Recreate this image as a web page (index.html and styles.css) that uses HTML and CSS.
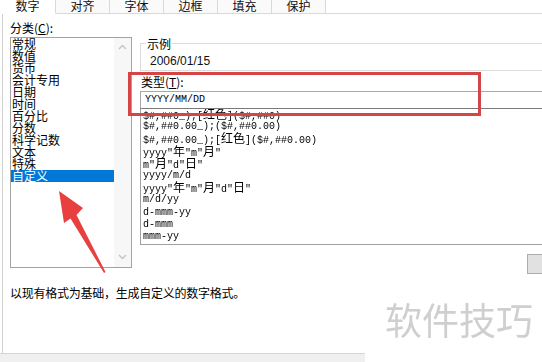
FILE: index.html
```html
<!DOCTYPE html>
<html lang="zh-CN">

<head>
    <meta charset="UTF-8">
    <title>设置单元格格式</title>
    <link rel="stylesheet" href="styles.css">
</head>

<body>

    <div class="dialog">
        <div class="tabs">
            <div class="tab active">数字</div>
            <div class="tab">对齐</div>
            <div class="tab">字体</div>
            <div class="tab">边框</div>
            <div class="tab">填充</div>
            <div class="tab">保护</div>
            <div class="tab-fill"></div>
        </div>

        <div class="panel">
            <div class="top">
                <div class="cat">
                    <div class="label">分类(<u>C</u>):</div>
                    <div class="catbox">
                        <ul class="catlist">
                            <li>常规</li>
                            <li>数值</li>
                            <li>货币</li>
                            <li>会计专用</li>
                            <li>日期</li>
                            <li>时间</li>
                            <li>百分比</li>
                            <li>分数</li>
                            <li>科学记数</li>
                            <li>文本</li>
                            <li>特殊</li>
                            <li class="sel">自定义</li>
                        </ul>
                        <div class="vscroll">
                            <svg width="17" height="14" viewBox="0 0 17 14"><path d="M5 9 L8.5 5.5 L12 9" fill="none" stroke="#c4c4c4" stroke-width="1.4"/></svg>
                            <svg width="17" height="14" viewBox="0 0 17 14"><path d="M5 5 L8.5 8.5 L12 5" fill="none" stroke="#c4c4c4" stroke-width="1.4"/></svg>
                        </div>
                    </div>
                </div>

                <div class="fmt">
                    <div class="sample">
                        <div class="legend">示例</div>
                        <div class="sample-val">2006/01/15</div>
                    </div>
                    <div class="label type-label">类型(<u>T</u>):</div>
                    <div class="type-input">YYYY/MM/DD</div>
                    <ul class="fmtlist">
                        <li>$#,##0_);[<span class="cj">红色</span>]($#,##0)</li>
                        <li>$#,##0.00_);($#,##0.00)</li>
                        <li>$#,##0.00_);[<span class="cj">红色</span>]($#,##0.00)</li>
                        <li>yyyy"<span class="cj">年</span>"m"<span class="cj">月</span>"</li>
                        <li>m"<span class="cj">月</span>"d"<span class="cj">日</span>"</li>
                        <li>yyyy/m/d</li>
                        <li>yyyy"<span class="cj">年</span>"m"<span class="cj">月</span>"d"<span class="cj">日</span>"</li>
                        <li>m/d/yy</li>
                        <li>d-mmm-yy</li>
                        <li>d-mmm</li>
                        <li>mmm-yy</li>
                    </ul>
                    <div class="btn-row">
                        <div class="btn"></div>
                    </div>
                </div>
            </div>

            <p class="desc">以现有格式为基础，生成自定义的数字格式。</p>
        </div>

        <div class="statusbar"></div>
    </div>

    <!-- annotation drawn on top of the screenshot -->
    <svg class="marks" width="542" height="362" viewBox="0 0 542 362">
        <rect x="129.5" y="73.5" width="350" height="41" fill="none" stroke="#d64545" stroke-width="3"/>
        <polygon points="59,191 83,208 76.5,215 105.5,272 104,273 70.5,218.5 64,223" fill="#e8403f"/>
    </svg>

    <div class="watermark">软件技巧</div>

</body>

</html>
```

FILE: styles.css
```css
body {
    margin: 0;
    padding: 0;
    width: 542px;
    height: 362px;
    overflow: hidden;
    position: relative;
    background-color: #fff;
    color: #000;
    font-family: "Noto Sans CJK SC", "Liberation Sans", sans-serif;
    font-size: 12px;
}

ul {
    list-style: none;
    margin: 0;
    padding: 0;
}

u {
    text-decoration: underline;
}

.dialog {
    width: 542px;
    height: 362px;
    overflow: hidden;
}

/* tab strip */
.tabs {
    display: flex;
    height: 14px;
}

.tab {
    box-sizing: border-box;
    width: 54px;
    height: 14px;
    line-height: 11px;
    text-align: center;
    background-color: #fafafa;
    border-right: 1px solid #d9d9d9;
    border-bottom: 1px solid #d9d9d9;
    color: #111;
}

.tab.active {
    width: 56px;
    background-color: #fff;
    border-bottom-color: #fff;
}

.tab-fill {
    flex: 1;
    border-bottom: 1px solid #d9d9d9;
}

/* main page of the tab */
.panel {
    box-sizing: border-box;
    height: 339px;
    margin-left: 2px;
    padding-left: 7px;
    border-left: 1px solid #d0d0d0;
}

.top {
    display: flex;
    align-items: flex-start;
}

.label {
    height: 12px;
    line-height: 12px;
}

.cat {
    flex: 0 0 122px;
}

.cat .label {
    margin-top: 8px;
}

.catbox {
    box-sizing: border-box;
    display: flex;
    height: 231px;
    margin-top: 3px;
    border: 1px solid #a3a3a3;
}

.catlist {
    flex: 1;
}

.catlist li {
    height: 12px;
    line-height: 12px;
    padding-left: 1px;
    white-space: nowrap;
}

.catlist li.sel {
    background-color: #0078d7;
    color: #fff;
}

.vscroll {
    flex: 0 0 17px;
    display: flex;
    flex-direction: column;
    justify-content: space-between;
    background-color: #f7f7f7;
    padding: 2px 0 3px;
}

.vscroll svg {
    display: block;
}

.fmt {
    flex: 0 0 420px;
    margin-left: 8px;
}

.sample {
    box-sizing: border-box;
    height: 28px;
    margin-top: 29px;
    border: 1px solid #dcdcdc;
}

.legend {
    width: max-content;
    height: 12px;
    line-height: 12px;
    margin-top: -6px;
    margin-left: 5px;
    padding: 0 1px;
    background-color: #fff;
}

.sample-val {
    margin-top: 5px;
    margin-left: 9px;
    height: 12px;
    line-height: 12px;
    font-family: "Liberation Sans", sans-serif;
    font-size: 12px;
    color: #111;
}

.type-label {
    margin-top: 5px;
    margin-left: 1px;
}

.type-input {
    box-sizing: border-box;
    height: 17px;
    margin-top: 3px;
    padding-left: 4px;
    line-height: 15px;
    border: 1px solid #a9a9a9;
    border-bottom: none;
    font-family: "Liberation Mono", monospace;
    font-size: 10px;
}

.fmtlist {
    box-sizing: border-box;
    height: 137px;
    border-top: 1px solid #7a7a7a;
    border-left: 1px solid #a0a0a0;
    border-bottom: 1px solid #a0a0a0;
    padding-left: 2px;
    font-family: "Liberation Mono", monospace;
    font-size: 10px;
    color: #000;
    overflow: hidden;
    will-change: transform;
}

.fmtlist li {
    height: 12.2px;
    line-height: 12.2px;
    white-space: nowrap;
}

.cj {
    font-family: "Noto Sans CJK SC", sans-serif;
    font-size: 12px;
    line-height: 10px;
}

.btn-row {
    display: flex;
    margin-top: 9px;
    padding-left: 387px;
}

.btn {
    box-sizing: border-box;
    width: 80px;
    height: 20px;
    background-color: #e1e1e1;
    border: 1px solid #adadad;
}

.desc {
    margin: 13px 0 0;
    height: 12px;
    line-height: 12px;
    letter-spacing: -0.25px;
}

.statusbar {
    box-sizing: border-box;
    width: 365px;
    height: 9px;
    background-color: #f0f0f0;
    border-top: 1px solid #d5d5d5;
}

.marks {
    position: absolute;
    left: 0;
    top: 0;
    pointer-events: none;
}

.watermark {
    position: absolute;
    left: 385px;
    top: 301px;
    font-family: "Noto Sans CJK SC", sans-serif;
    font-size: 37px;
    line-height: 1;
    color: #cfcfcf;
    white-space: nowrap;
}
```
